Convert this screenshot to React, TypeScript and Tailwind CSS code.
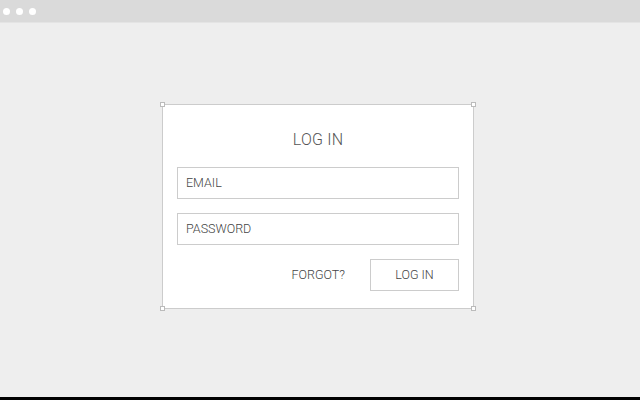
export default function App() {
  const font = { fontFamily: "Roboto, 'Liberation Sans', sans-serif" };
  return (
    <div className="w-[640px] h-[400px] flex flex-col bg-[#eeeeee] overflow-hidden" style={font}>
      <div className="h-[23px] shrink-0 bg-[#dadada] border-b border-[#e4e4e4] flex items-center gap-[6px] pl-[3px]">
        <span className="w-[7px] h-[7px] rounded-full bg-white" />
        <span className="w-[7px] h-[7px] rounded-full bg-white" />
        <span className="w-[7px] h-[7px] rounded-full bg-white" />
      </div>

      <main className="flex-1 pt-[81px] pl-[162px]">
        <div className="relative w-[312px] bg-white border border-[#cccccc] px-[14px] pt-[24px] pb-[17px] flex flex-col">
          <span className="absolute -left-[3px] -top-[3px] w-[5px] h-[5px] bg-white border border-[#bbbbbb]" />
          <span className="absolute -right-[3px] -top-[3px] w-[5px] h-[5px] bg-white border border-[#bbbbbb]" />
          <span className="absolute -left-[3px] -bottom-[3px] w-[5px] h-[5px] bg-white border border-[#bbbbbb]" />
          <span className="absolute -right-[3px] -bottom-[3px] w-[5px] h-[5px] bg-white border border-[#bbbbbb]" />

          <h1 className="text-[16px] leading-[22px] font-light text-center text-[#555555] tracking-[0.2px]">LOG IN</h1>

          <div className="mt-[16px] h-[32px] border border-[#cccccc] flex items-center px-[8px] pt-[1px] text-[12.5px] font-light text-[#444444]">
            EMAIL
          </div>
          <div className="mt-[14px] h-[32px] border border-[#cccccc] flex items-center px-[8px] pt-[1px] text-[12.5px] font-light text-[#444444]">
            PASSWORD
          </div>

          <div className="mt-[14px] flex items-center justify-end gap-[25px]">
            <span className="text-[12.5px] font-light text-[#444444] pt-[1px]">FORGOT?</span>
            <button className="w-[89px] h-[32px] border border-[#cccccc] pt-[1px] text-[12.5px] font-light text-[#444444] flex items-center justify-center">
              LOG IN
            </button>
          </div>
        </div>
      </main>

      <div className="h-[3px] shrink-0 bg-black" />
    </div>
  );
}
